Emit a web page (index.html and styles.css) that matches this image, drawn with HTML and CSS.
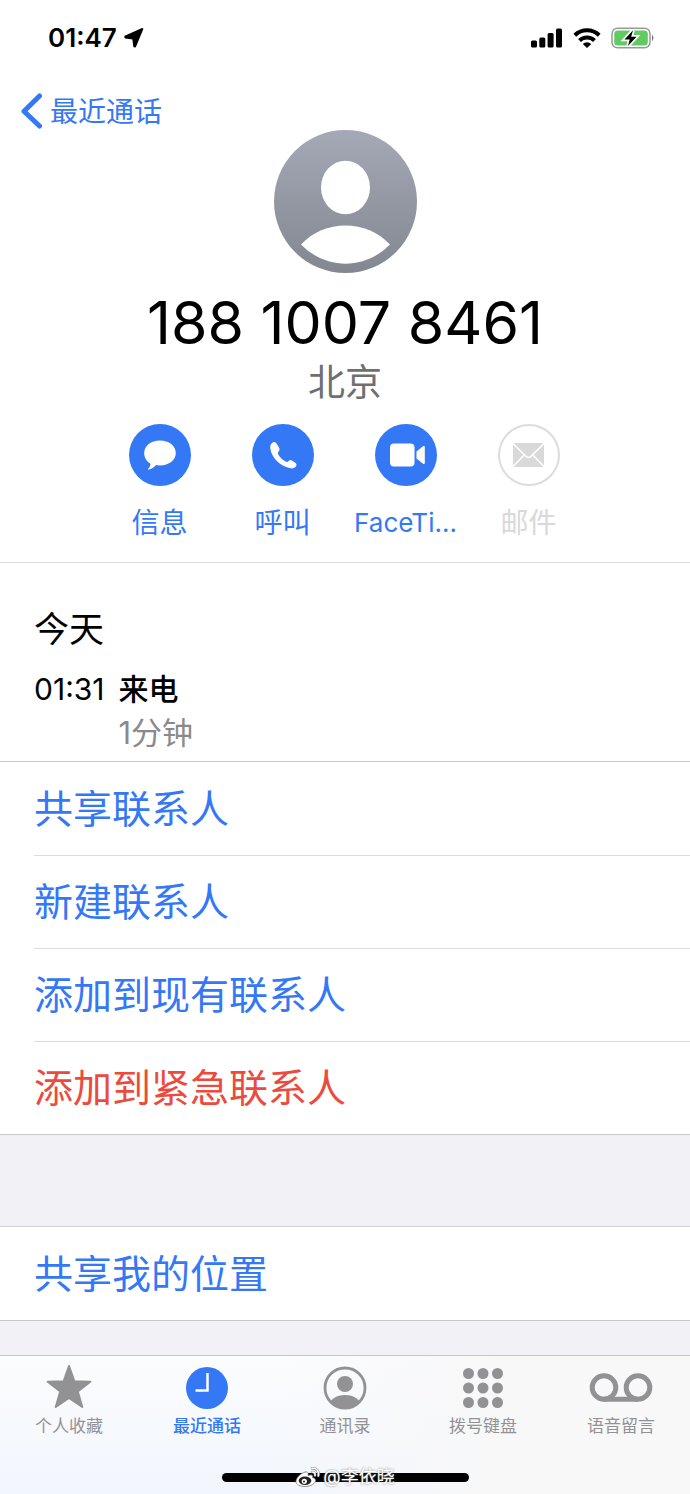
FILE: index.html
```html
<!DOCTYPE html>
<html lang="zh-CN">
<head>
<meta charset="utf-8">
<meta name="viewport" content="width=device-width, initial-scale=1">
<title>最近通话</title>
<link rel="stylesheet" href="styles.css">
</head>
<body>
<header class="status">
  <div class="status-group">
    <time class="clock">01:47</time>
    <svg class="locate" width="20" height="20" viewBox="0 0 20 20" aria-hidden="true"><path d="M18.600 1 11.300 18.700 10 18.500 9 10.900 1.200 9.700 1 8.500 17.800.800Z" stroke="#000" stroke-width="1.400" stroke-linejoin="round"/></svg>
  </div>
  <div class="status-group status-icons">
    <svg width="32" height="20" viewBox="0 0 32 20" aria-hidden="true"><rect x="0" y="12.500" width="6" height="7" rx="1.500"/><rect x="8.300" y="9.500" width="6" height="10" rx="1.500"/><rect x="16.600" y="5" width="6" height="14.500" rx="1.500"/><rect x="25" y="0.500" width="6" height="19" rx="1.500"/></svg>
    <svg width="28" height="20" viewBox="0 0 28 20" aria-hidden="true"><g fill="none" stroke="#000" stroke-width="4"><path d="M1.800 7.300a17.500 17.500 0 0 1 24.400 0"/><path d="M6.500 12.500a10.800 10.800 0 0 1 15 0"/></g><path d="M14 20 9.800 16a6 6 0 0 1 8.400 0Z"/></svg>
    <svg width="44" height="22" viewBox="0 0 44 22" aria-hidden="true"><rect x="1" y="1.200" width="38" height="19.600" rx="5.500" fill="#fff" stroke="#999" stroke-width="1.500"/><rect x="3.200" y="3.500" width="33.600" height="15" rx="3.500" fill="#5fcb62"/><path d="M41 7.500q2.800 3.500 0 7Z" fill="#777"/><path d="M22 3.200 13.500 12.600h5.200L17 19 25.500 9.800h-5.300Z" stroke="#fff" stroke-width="3.500" paint-order="stroke"/></svg>
  </div>
</header>

<nav class="navbar">
  <a class="back" href="#">
    <svg width="22" height="36" viewBox="0 0 22 36" aria-hidden="true"><path d="M19.500 3 4 18.200 19.500 33" fill="none" stroke="currentColor" stroke-width="5" stroke-linecap="round" stroke-linejoin="round"/></svg>
    <span>最近通话</span>
  </a>
</nav>

<main class="content">
  <section class="profile">
    <svg class="avatar" width="143" height="143" viewBox="0 0 143 143" role="img" aria-label="头像">
      <defs><linearGradient id="shade" x1="0" y1="0" x2="0" y2="1"><stop offset="0" stop-color="#a5a9b6"/><stop offset="1" stop-color="#838790"/></linearGradient></defs>
      <circle cx="71.500" cy="71.500" r="71.500" fill="url(#shade)"/>
      <ellipse cx="71.500" cy="57.500" rx="24.500" ry="26.700" fill="#fff"/>
      <path d="M27 114.500C50 89 93 89 116 114.500C91 140 52 140 27 114.500Z" fill="#fff"/>
    </svg>
    <h1 class="number">188 1007 8461</h1>
    <p class="place">北京</p>
    <div class="actions">
      <button class="action" type="button">
        <span class="disc"><svg width="62" height="62" viewBox="0 0 62 62" aria-hidden="true"><path d="M31 16.500c9 0 15.800 5.300 15.800 12.500S40 41.400 31 41.400c-1.500 0-2.700-.100-4-.400-2 2.500-4.500 4.200-7.600 4.700-.500-.200-.400-.700 0-1.100 1.300-1.400 2-2.900 2.100-4.900-4-2.300-6.300-6.200-6.300-10.700 0-7.200 6.800-12.500 15.800-12.500Z" fill="#fff"/></svg></span>
        <span>信息</span>
      </button>
      <button class="action" type="button">
        <span class="disc"><svg width="62" height="62" viewBox="0 0 62 62" aria-hidden="true"><path d="M18.500 21.500c.500-1.800 1.900-3.300 3.300-3.500 1.200-.200 2.100.600 3 2l2.200 3.600c.900 1.500.700 2.700-.300 3.800-.900 1-1.100 1.700-.400 3 1.800 3.200 4.400 5.500 7.500 7.200 1.100.600 1.800.300 2.800-.600 1.200-1.100 2.300-1.300 3.700-.300l3 2.100c1.200.900 1.600 2 .900 3.200-1 1.900-3.100 2.700-5.700 2.300C28.500 42.500 19.500 34 18.300 24.500c-.200-1.200-.100-2.100.200-3Z" fill="#fff"/></svg></span>
        <span>呼叫</span>
      </button>
      <button class="action" type="button">
        <span class="disc"><svg width="62" height="62" viewBox="0 0 62 62" aria-hidden="true"><rect x="15" y="19.500" width="24.500" height="23" rx="4" fill="#fff"/><path d="M41.500 27.500 48 22.300q1.800-1 1.800.800v15.800q0 1.800-1.800.800l-6.500-5.200Z" fill="#fff"/></svg></span>
        <span class="latin">FaceTi...</span>
      </button>
      <button class="action" type="button" disabled>
        <span class="disc disc-off"><svg width="62" height="62" viewBox="0 0 62 62" aria-hidden="true"><rect x="15" y="19" width="31" height="24" rx="1.500" fill="#d9d9d9"/><path d="m15 19.500 13 12.800q2.500 2.200 5 0l13-12.800M15 42.500l11-11.300M46 42.500 35 31.200" fill="none" stroke="#fff" stroke-width="1.600"/></svg></span>
        <span>邮件</span>
      </button>
    </div>
  </section>

  <section class="log">
    <h2 class="day">今天</h2>
    <div class="call">
      <time>01:31</time>
      <div>
        <p class="kind">来电</p>
        <p class="length">1分钟</p>
      </div>
    </div>
  </section>

  <div class="options">
    <button class="option" type="button"><span>共享联系人</span></button>
    <button class="option" type="button"><span>新建联系人</span></button>
    <button class="option" type="button"><span>添加到现有联系人</span></button>
    <button class="option option-alert" type="button"><span>添加到紧急联系人</span></button>
  </div>
  <div class="options options-apart">
    <button class="option" type="button"><span>共享我的位置</span></button>
  </div>
</main>

<footer class="bottom">
  <nav class="tabs">
    <a class="tab" href="#">
      <svg width="64" height="48" viewBox="0 0 64 48" aria-hidden="true"><path d="M32 3 37.300 18.200 53.300 18.700 40.800 28.500 45.300 44 32 35 18.700 44 23.200 28.500 10.700 18.700 26.700 18.200Z" fill="currentColor" stroke="currentColor" stroke-width="2" stroke-linejoin="round"/></svg>
      <span>个人收藏</span>
    </a>
    <a class="tab tab-current" href="#" aria-current="page">
      <svg width="64" height="48" viewBox="0 0 64 48" aria-hidden="true"><circle cx="32" cy="25" r="21" fill="currentColor"/><path d="M32.500 10v17.500H20.500" fill="none" stroke="#fff" stroke-width="2.500"/></svg>
      <span>最近通话</span>
    </a>
    <a class="tab" href="#">
      <svg width="64" height="48" viewBox="0 0 64 48" aria-hidden="true"><defs><clipPath id="ring"><circle cx="32" cy="25" r="20"/></clipPath></defs><circle cx="32" cy="25" r="20" fill="none" stroke="currentColor" stroke-width="2.800"/><circle cx="32" cy="21" r="8" fill="currentColor"/><ellipse cx="32" cy="43" rx="16" ry="11" fill="currentColor" clip-path="url(#ring)"/></svg>
      <span>通讯录</span>
    </a>
    <a class="tab" href="#">
      <svg width="64" height="48" viewBox="0 0 64 48" aria-hidden="true"><g fill="currentColor"><circle cx="17.500" cy="10.500" r="5.500"/><circle cx="32" cy="10.500" r="5.500"/><circle cx="46.500" cy="10.500" r="5.500"/><circle cx="17.500" cy="25" r="5.500"/><circle cx="32" cy="25" r="5.500"/><circle cx="46.500" cy="25" r="5.500"/><circle cx="17.500" cy="39.500" r="5.500"/><circle cx="32" cy="39.500" r="5.500"/><circle cx="46.500" cy="39.500" r="5.500"/></g></svg>
      <span>拨号键盘</span>
    </a>
    <a class="tab" href="#">
      <svg width="64" height="48" viewBox="0 0 64 48" aria-hidden="true"><g fill="none" stroke="currentColor" stroke-width="5"><circle cx="15" cy="24.500" r="11.800"/><circle cx="49" cy="24.500" r="11.800"/><path d="M15 36.300h34"/></g></svg>
      <span>语音留言</span>
    </a>
  </nav>
  <div class="home">
    <div class="bar"></div>
    <div class="mark">
      <svg width="26" height="22" viewBox="0 0 26 22" aria-hidden="true"><path d="M10 6C6 7 1 12 1 15.500c0 3 4 5 9 5 6 0 10.500-3 10.500-6 0-1.800-1.500-2.600-3-3 .7-2-.2-3.500-4.500-2C13.700 6.800 12.500 5.400 10 6Z" fill="#fff" stroke="#777" stroke-width=".8"/><ellipse cx="10" cy="14.800" rx="6.300" ry="4.200" fill="#222"/><circle cx="9.300" cy="15.300" r="2.600" fill="#fff"/><circle cx="9" cy="15.600" r="1" fill="#222"/><g fill="none" stroke-linecap="round"><path d="M17 2.500c4-.8 7.500 2.500 6.300 7.300M17 6c2-.2 3.400 1.200 3 3.400" stroke="#888" stroke-width="2.600"/><path d="M17 2.500c4-.8 7.500 2.500 6.300 7.300M17 6c2-.2 3.400 1.200 3 3.400" stroke="#fff" stroke-width="1.500"/></g></svg>
      <span>@李依晓</span>
    </div>
  </div>
</footer>
</body>
</html>
```
FILE: styles.css
```css
* {
  box-sizing: border-box;
}

body {
  display: flex;
  flex-direction: column;
  min-height: 100vh;
  margin: 0;
  background: #f1f1f6;
  color: #000;
  font-family: Inter, "Noto Sans CJK SC", sans-serif;
}

h1,
h2,
p {
  margin: 0;
  font-weight: 400;
}

button {
  margin: 0;
  padding: 0;
  border: 0;
  background: none;
  color: inherit;
  font: inherit;
}

a {
  color: inherit;
  text-decoration: none;
}

svg {
  display: block;
  flex: none;
}

.status {
  display: flex;
  align-items: center;
  justify-content: space-between;
  height: 76px;
  padding: 0 35px 0 48px;
  background: #fff;
}

.status-group {
  display: flex;
  align-items: center;
  gap: 7px;
}

.status-icons {
  gap: 10px;
}

.clock {
  font-size: 26px;
  font-weight: 600;
  line-height: 32px;
}

.navbar {
  height: 54px;
  padding: 16px 20px 0;
  background: #fff;
  color: #3478f6;
}

.back {
  display: inline-flex;
  align-items: center;
  gap: 8px;
  font-size: 28px;
  line-height: 36px;
}

.back span {
  padding-top: 2px;
}

.profile {
  display: flex;
  flex-direction: column;
  align-items: center;
  border-bottom: 1px solid #dcdcde;
  background: #fff;
}

.number {
  margin-top: 15px;
  font-size: 59px;
  line-height: 70px;
}

.place {
  color: #6f6f71;
  font-size: 37px;
  line-height: 50px;
}

.actions {
  display: grid;
  grid-template-columns: repeat(4, 123px);
  margin-top: 16px;
  padding: 0 2px 18px 0;
}

.action {
  display: flex;
  flex-direction: column;
  align-items: center;
  gap: 16px;
  color: #3478f6;
  font-size: 28px;
  line-height: 42px;
}

.action:disabled {
  color: #d9d9d9;
}

.latin {
  font-size: 26px;
}

.disc {
  border-radius: 50%;
  background: #3478f6;
}

.disc-off {
  background: #fff;
  box-shadow: inset 0 0 0 2px #dcdcdc;
}

.log {
  padding: 41px 34px 6px;
  border-bottom: 1px solid #c8c8ca;
  background: #fff;
}

.day {
  font-size: 35px;
  line-height: 50px;
}

.call {
  display: flex;
  gap: 14px;
  margin-top: 13px;
  font-size: 30px;
  line-height: 44px;
}

.kind {
  font-weight: 500;
}

.length {
  color: #8a8a8d;
  font-size: 31px;
}

.options {
  border-bottom: 1px solid #c8c8ca;
  background: #fff;
}

.options-apart {
  margin-top: 91px;
  border-top: 1px solid #d0d0d4;
}

.option {
  display: block;
  width: 100%;
  padding-left: 34px;
  color: #3478f6;
  font-size: 39px;
  line-height: 92px;
  text-align: left;
}

.option span {
  display: block;
  border-top: 1px solid transparent;
}

.option + .option span {
  border-color: #dcdcde;
}

.option-alert {
  color: #eb4b3d;
}

.bottom {
  display: flex;
  flex-direction: column;
  justify-content: space-between;
  height: 139px;
  margin-top: auto;
  padding-bottom: 5px;
  border-top: 1px solid #c6c6ca;
  background: linear-gradient(100deg, #f3f7fd00 40%, #f8f8f9 70%), linear-gradient(#fbfcfd, #f2f6fd);
}

.tabs {
  display: grid;
  grid-template-columns: repeat(5, 1fr);
  padding-top: 7px;
}

.tab {
  display: flex;
  flex-direction: column;
  align-items: center;
  gap: 3px;
  color: #929295;
  font-size: 17px;
  line-height: 24px;
}

.tab-current {
  color: #3478f6;
  font-weight: 500;
}

.home {
  display: grid;
  place-items: center;
  height: 24px;
}

.bar,
.mark {
  grid-area: 1 / 1;
}

.bar {
  width: 247px;
  height: 9px;
  border-radius: 5px;
  background: #000;
}

.mark {
  display: flex;
  align-items: center;
  gap: 2px;
  color: #fff;
  font-size: 18px;
  line-height: 24px;
  text-shadow: 0 0 2px #777;
}
```
